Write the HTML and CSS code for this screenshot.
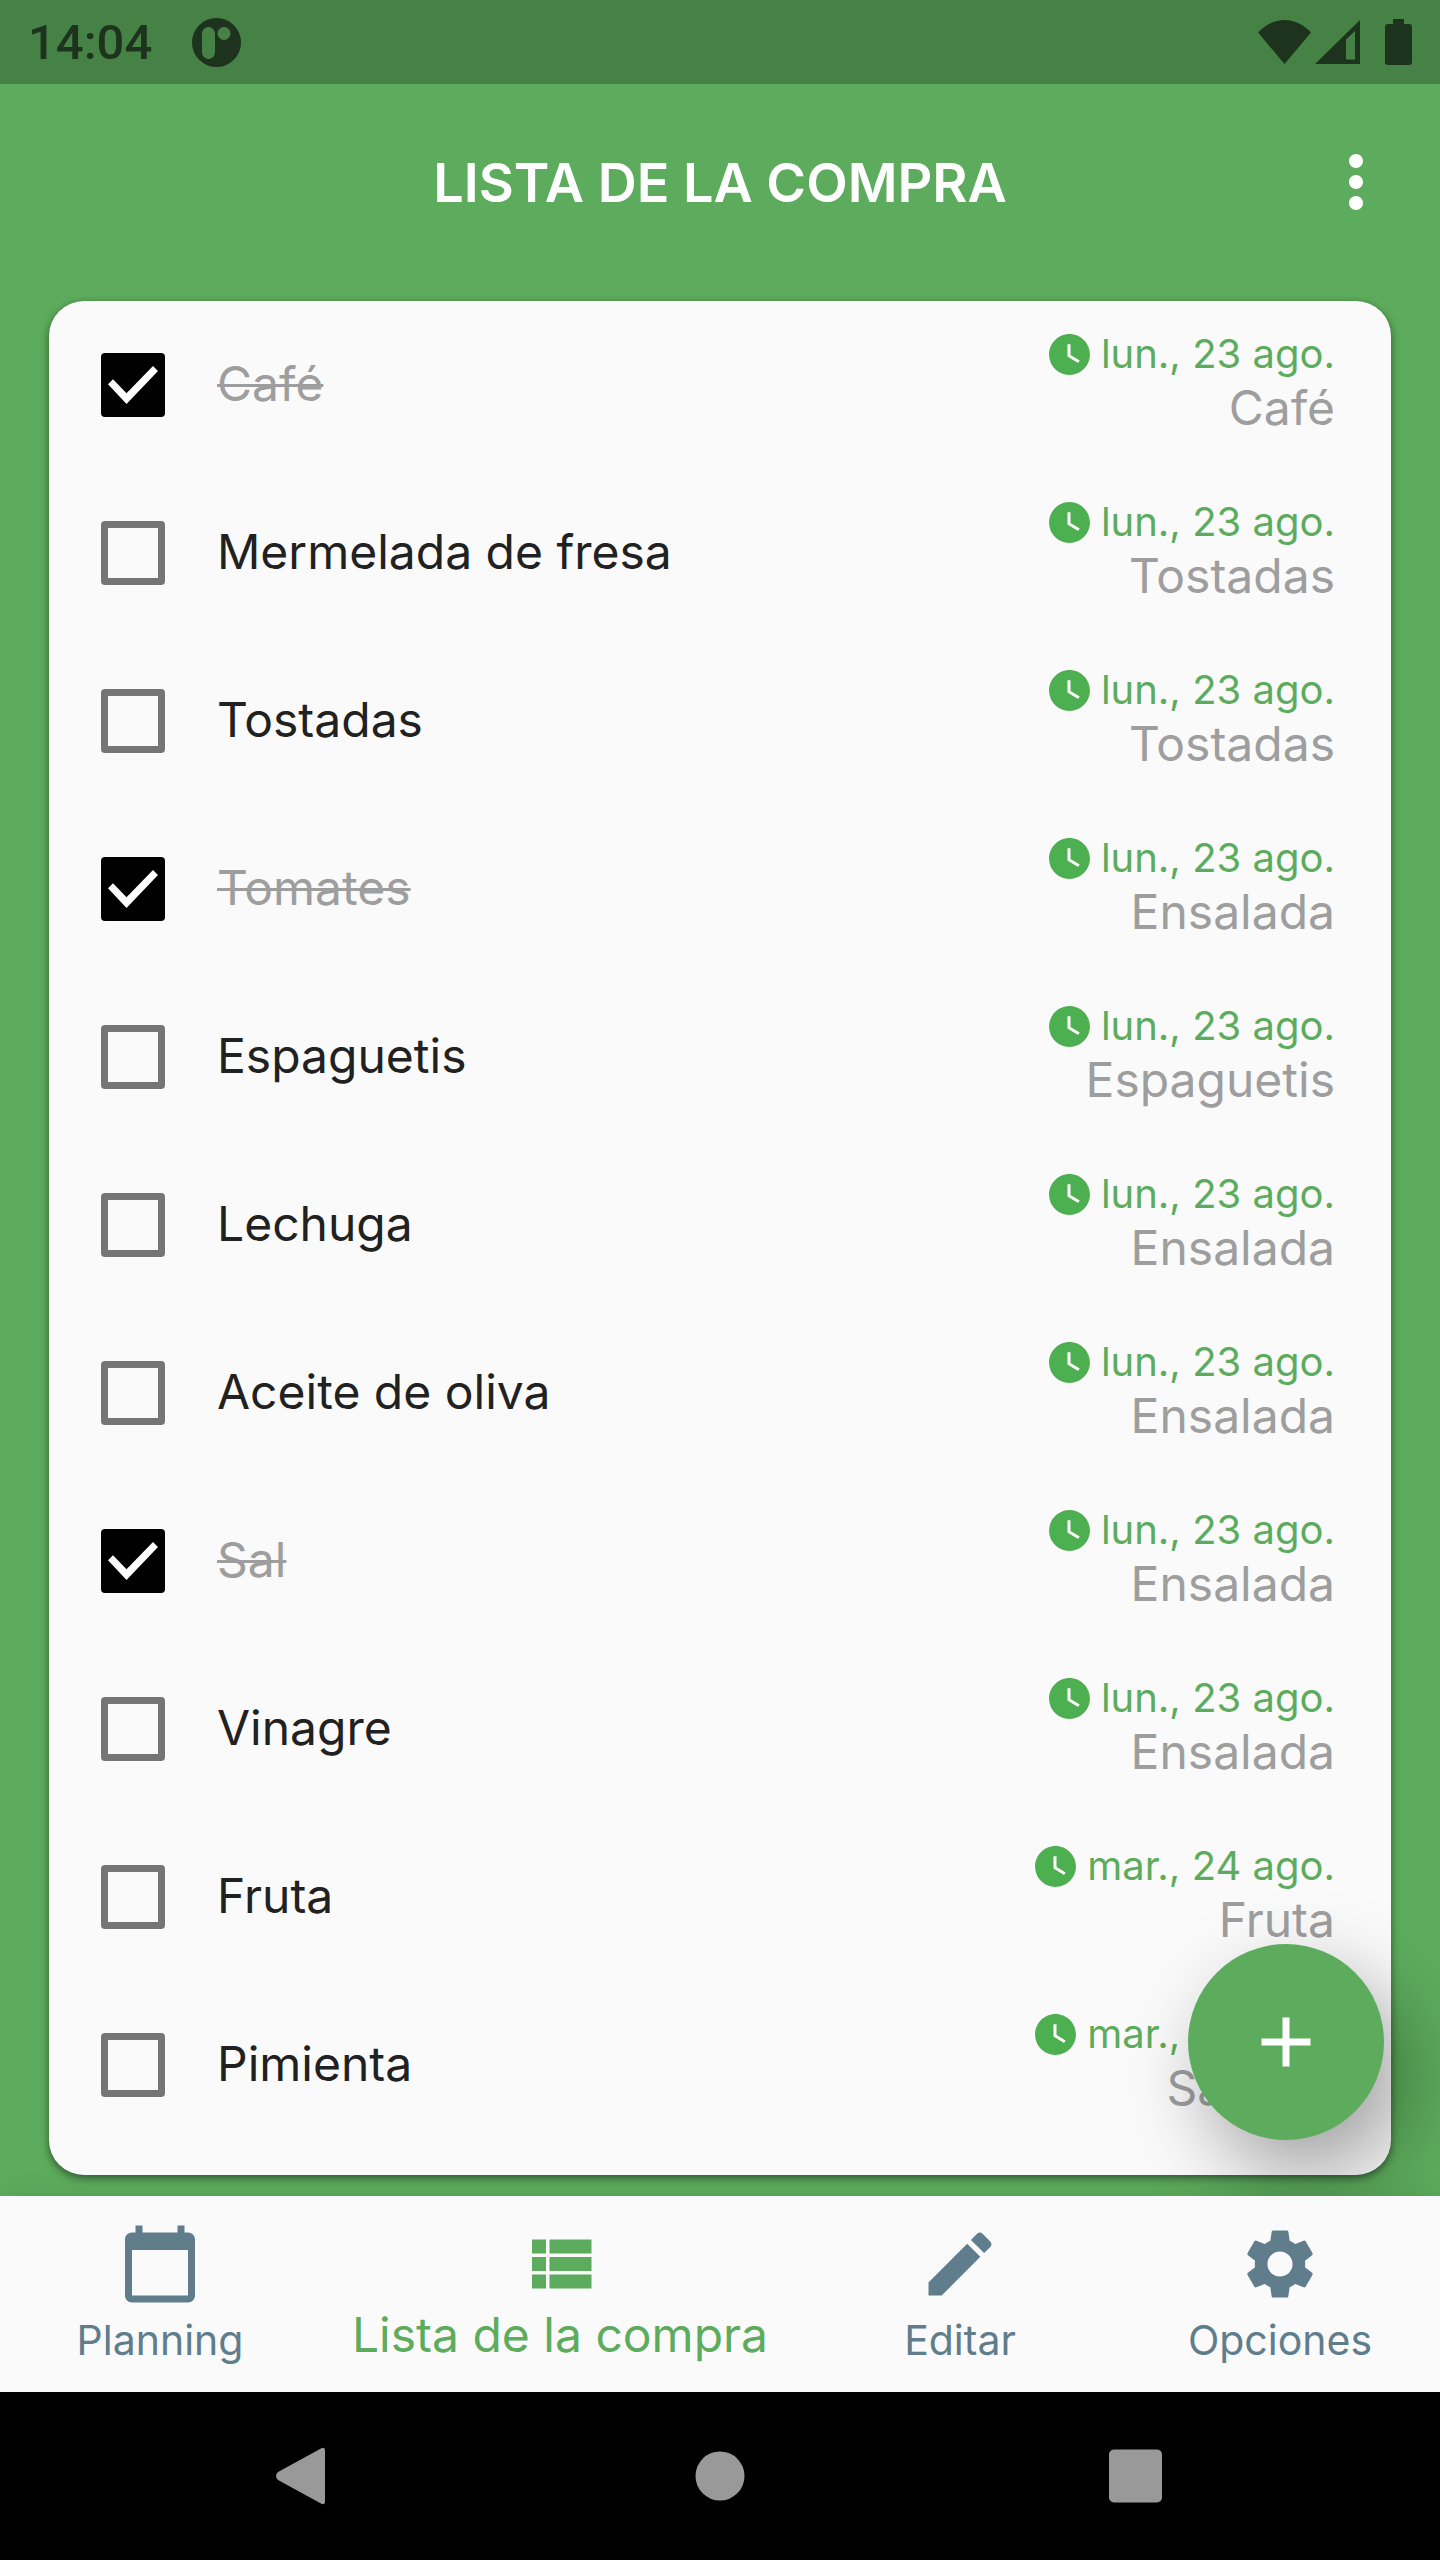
FILE: index.html
```html
<!DOCTYPE html>
<html lang="es">
<head>
  <meta charset="utf-8">
  <meta name="viewport" content="width=device-width, initial-scale=1">
  <title>Lista de la compra</title>
  <link rel="stylesheet" href="styles.css">
</head>
<body>
  <svg class="sprite" aria-hidden="true">
    <symbol id="clock" viewBox="0 0 24 24">
      <path d="M12 2C6.5 2 2 6.5 2 12s4.5 10 10 10 10-4.5 10-10S17.5 2 12 2zm4.2 14.2L11 13V7h1.5v5.2l4.5 2.7-.8 1.3z"/>
    </symbol>
  </svg>

  <div class="status-bar">
    <span class="time">14:04</span>
    <svg class="app-badge" viewBox="0 0 49 49">
      <circle cx="24.500" cy="24.500" r="24.500" fill="#1d331d"/>
      <rect x="10" y="9" width="13" height="32" rx="6.500" fill="#468246"/>
      <circle cx="32" cy="15.500" r="6.500" fill="#468246"/>
    </svg>
    <div class="status-icons">
      <svg class="wifi" viewBox="0 0 53 44"><path d="M0 12.500C7 5 16 0 26.500 0S46 5 53 12.500L26.500 44z"/></svg>
      <svg class="signal" viewBox="0 0 45 44"><path fill-rule="evenodd" d="M0 44L45 0v44zM31 19.500V39.500h9V11z"/></svg>
      <svg class="battery" viewBox="0 0 27 46"><path d="M8 0h11v5h5a3 3 0 0 1 3 3v35a3 3 0 0 1-3 3H3a3 3 0 0 1-3-3V8a3 3 0 0 1 3-3h5z"/></svg>
    </div>
  </div>

  <header class="app-bar">
    <h1>LISTA DE LA COMPRA</h1>
    <button class="menu-btn" aria-label="Más opciones">
      <svg viewBox="0 0 24 24"><path d="M12 8c1.100 0 2-.9 2-2s-.9-2-2-2-2 .9-2 2 .9 2 2 2zm0 2c-1.100 0-2 .9-2 2s.9 2 2 2 2-.9 2-2-.9-2-2-2zm0 6c-1.100 0-2 .9-2 2s.9 2 2 2 2-.9 2-2-.9-2-2-2z"/></svg>
    </button>
  </header>

  <main>
    <ul class="card">
      <li>
        <label><input type="checkbox" checked><span class="name">Café</span></label>
        <div class="info"><span class="date"><svg><use href="#clock"/></svg>lun., 23 ago.</span><span class="meal">Café</span></div>
      </li>
      <li>
        <label><input type="checkbox"><span class="name">Mermelada de fresa</span></label>
        <div class="info"><span class="date"><svg><use href="#clock"/></svg>lun., 23 ago.</span><span class="meal">Tostadas</span></div>
      </li>
      <li>
        <label><input type="checkbox"><span class="name">Tostadas</span></label>
        <div class="info"><span class="date"><svg><use href="#clock"/></svg>lun., 23 ago.</span><span class="meal">Tostadas</span></div>
      </li>
      <li>
        <label><input type="checkbox" checked><span class="name">Tomates</span></label>
        <div class="info"><span class="date"><svg><use href="#clock"/></svg>lun., 23 ago.</span><span class="meal">Ensalada</span></div>
      </li>
      <li>
        <label><input type="checkbox"><span class="name">Espaguetis</span></label>
        <div class="info"><span class="date"><svg><use href="#clock"/></svg>lun., 23 ago.</span><span class="meal">Espaguetis</span></div>
      </li>
      <li>
        <label><input type="checkbox"><span class="name">Lechuga</span></label>
        <div class="info"><span class="date"><svg><use href="#clock"/></svg>lun., 23 ago.</span><span class="meal">Ensalada</span></div>
      </li>
      <li>
        <label><input type="checkbox"><span class="name">Aceite de oliva</span></label>
        <div class="info"><span class="date"><svg><use href="#clock"/></svg>lun., 23 ago.</span><span class="meal">Ensalada</span></div>
      </li>
      <li>
        <label><input type="checkbox" checked><span class="name">Sal</span></label>
        <div class="info"><span class="date"><svg><use href="#clock"/></svg>lun., 23 ago.</span><span class="meal">Ensalada</span></div>
      </li>
      <li>
        <label><input type="checkbox"><span class="name">Vinagre</span></label>
        <div class="info"><span class="date"><svg><use href="#clock"/></svg>lun., 23 ago.</span><span class="meal">Ensalada</span></div>
      </li>
      <li>
        <label><input type="checkbox"><span class="name">Fruta</span></label>
        <div class="info"><span class="date"><svg><use href="#clock"/></svg>mar., 24 ago.</span><span class="meal">Fruta</span></div>
      </li>
      <li>
        <label><input type="checkbox"><span class="name">Pimienta</span></label>
        <div class="info"><span class="date"><svg><use href="#clock"/></svg>mar., 24 ago.</span><span class="meal">Salmón</span></div>
      </li>
    </ul>
    <button class="fab" aria-label="Añadir">
      <svg viewBox="0 0 24 24"><path d="M19 13h-6v6h-2v-6H5v-2h6V5h2v6h6v2z"/></svg>
    </button>
  </main>

  <nav class="tabs">
    <a href="#planning">
      <svg viewBox="0 0 24 24"><path d="M20 3h-1V1h-2v2H7V1H5v2H4c-1.100 0-2 .9-2 2v16c0 1.100.9 2 2 2h16c1.100 0 2-.9 2-2V5c0-1.100-.9-2-2-2zm0 18H4V8h16v13z"/></svg>
      <span>Planning</span>
    </a>
    <a href="#lista" class="active">
      <svg viewBox="0 0 24 24"><path d="M4 14h4v-4H4v4zm0 5h4v-4H4v4zM4 9h4V5H4v4zm5 5h12v-4H9v4zm0 5h12v-4H9v4zM9 5v4h12V5H9z"/></svg>
      <span>Lista de la compra</span>
    </a>
    <a href="#editar">
      <svg viewBox="0 0 24 24"><path d="M3 17.250V21h3.750L17.810 9.940l-3.750-3.750L3 17.250zM20.710 7.040c.39-.39.39-1.020 0-1.410l-2.340-2.340c-.39-.39-1.020-.39-1.410 0l-1.830 1.830 3.750 3.750 1.830-1.830z"/></svg>
      <span>Editar</span>
    </a>
    <a href="#opciones">
      <svg viewBox="0 0 24 24"><path d="M19.140 12.940c.04-.3.06-.61.06-.94 0-.32-.02-.64-.07-.94l2.030-1.580c.18-.14.23-.41.12-.61l-1.920-3.320c-.12-.22-.37-.29-.59-.22l-2.390.96c-.5-.38-1.030-.7-1.620-.94l-.36-2.540c-.04-.24-.24-.41-.48-.41h-3.840c-.24 0-.43.17-.47.41l-.36 2.540c-.59.24-1.130.57-1.620.94l-2.390-.96c-.22-.08-.47 0-.59.22L2.740 8.870c-.12.21-.08.47.12.61l2.030 1.580c-.05.3-.09.63-.09.94s.02.64.07.94l-2.030 1.580c-.18.14-.23.41-.12.61l1.920 3.320c.12.22.37.29.59.22l2.390-.96c.5.38 1.030.7 1.620.94l.36 2.540c.05.24.24.41.48.41h3.840c.24 0 .44-.17.47-.41l.36-2.540c.59-.24 1.130-.56 1.620-.94l2.390.96c.22.08.47 0 .59-.22l1.920-3.320c.12-.22.07-.47-.12-.61l-2.010-1.580zM12 15.600c-1.980 0-3.600-1.620-3.600-3.600s1.620-3.600 3.600-3.600 3.600 1.620 3.600 3.600-1.620 3.600-3.600 3.600z"/></svg>
      <span>Opciones</span>
    </a>
  </nav>

  <div class="system-nav">
    <button aria-label="Atrás"><svg viewBox="0 0 84 84"><path d="M20 38L63 14.500q4-2 4 2v51q0 4-4 2L20 46q-4-4 0-8z"/></svg></button>
    <button aria-label="Inicio"><svg viewBox="0 0 84 84"><circle cx="42" cy="42" r="24.500"/></svg></button>
    <button aria-label="Recientes"><svg viewBox="0 0 84 84"><rect x="11" y="15.500" width="53" height="53" rx="5"/></svg></button>
  </div>
</body>
</html>
```
FILE: styles.css
```css
* {
  box-sizing: border-box;
}

body {
  margin: 0;
  min-height: 100vh;
  display: flex;
  flex-direction: column;
  background: #5dac5d;
  color: #212121;
  font-family: Inter, Roboto, sans-serif;
}

svg {
  display: block;
  fill: currentColor;
}

button {
  padding: 0;
  border: none;
  background: none;
  cursor: pointer;
}

.sprite {
  display: none;
}

/* status bar */
.status-bar {
  display: flex;
  align-items: center;
  height: 84px;
  padding: 0 28px;
  background: #468246;
  color: #1d331d;
}

.time {
  font-family: Roboto, sans-serif;
  font-size: 49px;
  font-weight: 500;
}

.app-badge {
  width: 49px;
  height: 49px;
  margin-left: 40px;
}

.status-icons {
  display: flex;
  align-items: center;
  margin-left: auto;
}

.wifi {
  width: 53px;
  height: 44px;
}

.signal {
  width: 45px;
  height: 44px;
  margin: 0 25px 0 4px;
}

.battery {
  width: 27px;
  height: 46px;
}

/* title bar */
.app-bar {
  display: grid;
  grid-template-columns: 84px 1fr 84px;
  align-items: center;
  height: 196px;
  padding: 0 42px;
  color: white;
}

.app-bar h1 {
  grid-column: 2;
  margin: 0;
  font-size: 54px;
  font-weight: 600;
  text-align: center;
}

.menu-btn {
  color: white;
}

.menu-btn svg,
.fab svg {
  width: 84px;
  height: 84px;
}

/* shopping list */
main {
  position: relative;
  flex: 1;
  display: flex;
  flex-direction: column;
  padding: 21px 49px;
  overflow: hidden;
}

.card {
  flex: 1;
  margin: 0;
  padding: 0 56px 0 52px;
  list-style: none;
  background: #fafafa;
  border-radius: 35px;
  box-shadow: 0 3px 8px rgba(0, 0, 0, 0.5);
}

.card li {
  display: flex;
  align-items: center;
  justify-content: space-between;
  height: 168px;
}

.card label {
  display: flex;
  align-items: center;
  gap: 52px;
  font-size: 48px;
}

.name,
.info {
  padding-bottom: 4px;
}

.card input {
  appearance: none;
  width: 64px;
  height: 64px;
  margin: 0;
  border: 7px solid #757575;
  border-radius: 4px;
}

.card input:checked {
  display: grid;
  place-items: center;
  border: none;
  background: black;
}

.card input:checked::before {
  content: "";
  width: 50px;
  height: 38px;
  background: white;
  clip-path: polygon(0 48%, 10% 35%, 37% 72%, 90% 0, 100% 13%, 37% 100%);
}

.card input:checked + .name {
  color: #9e9e9e;
  text-decoration: line-through;
  text-decoration-thickness: 3px;
}

.info {
  display: flex;
  flex-direction: column;
  align-items: flex-end;
}

.date {
  display: flex;
  align-items: center;
  gap: 7px;
  font-size: 40px;
  line-height: 50px;
  color: #5dac5d;
}

.date svg {
  width: 49px;
  height: 49px;
  color: #4caf50;
}

.meal {
  font-size: 48px;
  line-height: 58px;
  color: #9e9e9e;
}

.fab {
  position: absolute;
  right: 56px;
  bottom: 56px;
  display: grid;
  place-items: center;
  width: 196px;
  height: 196px;
  border-radius: 50%;
  background: #5dac5d;
  color: white;
  box-shadow: 21px 35px 84px rgba(0, 0, 0, 0.36);
}

/* bottom tabs */
.tabs {
  position: relative;
  display: flex;
  height: 196px;
  padding-top: 26px;
  background: #fafafa;
  box-shadow: 0 0 28px rgba(0, 0, 0, 0.1);
}

.tabs a {
  flex: 2;
  display: flex;
  flex-direction: column;
  align-items: center;
  color: #607d8b;
  font-size: 41px;
  line-height: 68px;
  text-decoration: none;
  white-space: nowrap;
}

.tabs a.active {
  flex: 3;
  color: #5dac5d;
  font-size: 48px;
  line-height: 58px;
}

.tabs svg {
  width: 84px;
  height: 84px;
}

.system-nav {
  position: relative;
  display: flex;
  align-items: center;
  height: 168px;
  padding: 0 90px;
  background: black;
}

.system-nav button {
  flex: 1;
  display: flex;
  justify-content: center;
  color: #999;
}

.system-nav svg {
  width: 84px;
  height: 84px;
}
```
